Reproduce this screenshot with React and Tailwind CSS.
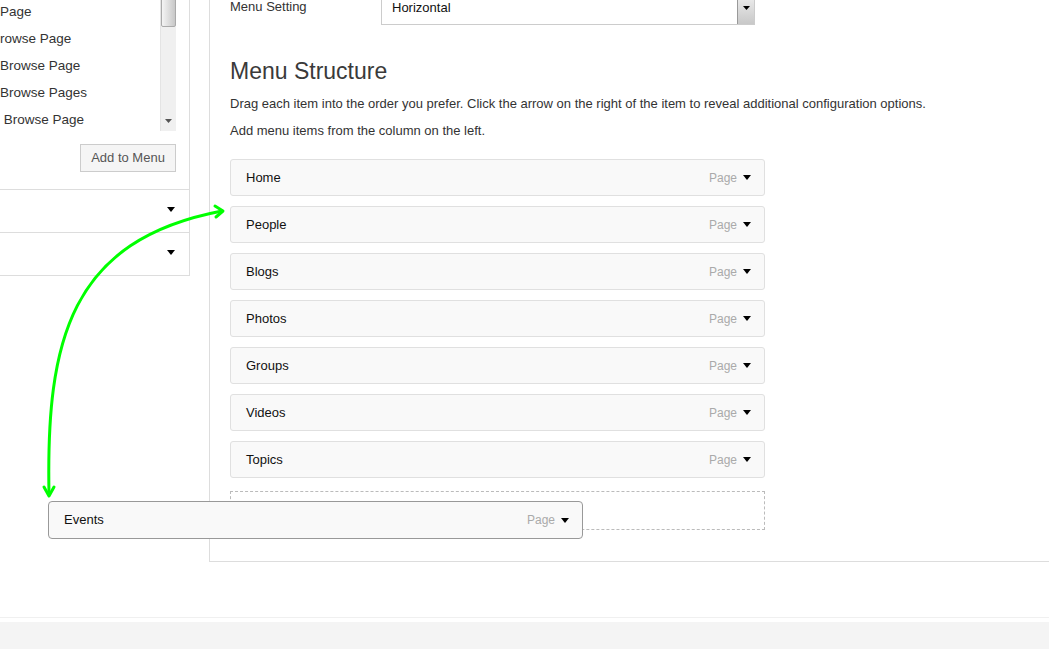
import React from 'react'

const items = ['Home', 'People', 'Blogs', 'Photos', 'Groups', 'Videos', 'Topics']
const leftList = ['Page', 'rowse Page', 'Browse Page', 'Browse Pages', '\u00a0Browse Page']

function Caret({ className = '' }) {
  return (
    <svg className={className} width="8" height="5" viewBox="0 0 8 5">
      <path d="M0 0h8L4 5z" fill="#000" />
    </svg>
  )
}

function MenuItem({ label }) {
  return (
    <div className="flex h-[37px] w-[535px] items-center rounded-[3px] border border-[#e0e0e0] bg-[#f9f9f9] pl-[15px] pr-[13px]">
      <span className="flex-1 text-[13px] text-[#111]">{label}</span>
      <span className="text-[12px] text-[#aaa]">Page</span>
      <Caret className="ml-[6px]" />
    </div>
  )
}

export default function App() {
  return (
    <div className="relative flex min-h-[649px] w-full flex-col overflow-hidden bg-white font-['Liberation_Sans',Arial,sans-serif] text-[#333]">
      <div className="flex">
        {/* left column: add items */}
        <div className="w-[190px] shrink-0">
          <div className="border-r border-b border-[#ddd]">
            <div className="flex pr-[13px]">
              <div className="-mt-[1px] flex-1 overflow-hidden">
                {leftList.map((t, i) => (
                  <div key={i} className="flex h-[27px] items-center whitespace-pre text-[13.5px] text-[#333]">{t}</div>
                ))}
              </div>
              <div className="-mt-[4px] flex h-[135px] w-[16px] flex-col border-l border-[#e4e4e4] bg-[#f0f0f0]">
                <div className="h-[31px] rounded-b-[2px] border border-[#aaa] bg-gradient-to-r from-[#f4f4f4] to-[#c8c8c8]"></div>
                <div className="flex-1"></div>
                <div className="flex h-[12px] items-start justify-center">
                  <svg width="7" height="4" viewBox="0 0 7 4"><path d="M0 0h7L3.5 4z" fill="#555" /></svg>
                </div>
              </div>
            </div>
            <div className="flex justify-end pt-[10px] pb-[17px] pr-[13px]">
              <button className="h-[28px] w-[96px] border border-[#ccc] bg-[#f5f5f5] text-[13px] text-[#555]">Add to Menu</button>
            </div>
            <div className="flex h-[43px] items-center justify-end border-t border-[#ddd] pr-[14px] pb-[3px]">
              <Caret />
            </div>
            <div className="flex h-[43px] items-center justify-end border-t border-[#ddd] pr-[14px] pb-[3px]">
              <Caret />
            </div>
          </div>
        </div>

        {/* main column */}
        <div className="ml-[19px] flex-1 border-l border-b border-[#ddd] pl-5 pb-[31px]">
          <div className="flex items-start">
            <div className="w-[151px] pt-[1px] text-[13px] leading-[12px] text-[#333]">Menu Setting</div>
            <div className="-mt-[7px] flex h-[32px] w-[374px] items-center border border-[#ccc] bg-white">
              <span className="flex-1 -mt-[2px] pl-[10px] text-[13px] text-[#111]">Horizontal</span>
              <div className="flex h-full w-[17px] items-center justify-center border-l border-[#999] bg-gradient-to-b from-[#f0f0f0] to-[#c8c8c8]">
                <svg width="7" height="4" viewBox="0 0 7 4" className="-mt-[2px]"><path d="M0 0h7L3.5 4z" fill="#000" /></svg>
              </div>
            </div>
          </div>

          <h2 className="mt-[32px] text-[23px] leading-[28px] text-[#3a3a3a]">Menu Structure</h2>
          <p className="mt-[11px] text-[13px] leading-[15px]">Drag each item into the order you prefer. Click the arrow on the right of the item to reveal additional configuration options.</p>
          <p className="mt-[12px] text-[13px] leading-[15px]">Add menu items from the column on the left.</p>

          <div className="mt-[21px] flex flex-col gap-[10px]">
            {items.map(t => <MenuItem key={t} label={t} />)}
            <div className="mt-[3px] h-[39px] w-[535px] border border-dashed border-[#bbb]"></div>
          </div>
        </div>
      </div>

      <div className="mt-[55px] h-[5px] border-t border-[#f0f0f0]"></div>
      <div className="flex-1 bg-[#f4f4f4]"></div>

      {/* item being dragged */}
      <div className="absolute left-[48px] top-[501px] flex h-[38px] w-[535px] items-center rounded-[4px] border border-[#999] bg-[#f9f9f9] pl-[15px] pr-[13px]">
        <span className="flex-1 text-[13px] text-[#111]">Events</span>
        <span className="text-[12px] text-[#aaa]">Page</span>
        <Caret className="ml-[6px]" />
      </div>

      {/* green guide arrow */}
      <svg className="pointer-events-none absolute left-0 top-0" width="1049" height="649">
        <g fill="none" stroke="#00ff00" strokeWidth="3" strokeLinecap="round" strokeLinejoin="round">
          <path d="M49 494 C46 340 70 240 222 211" />
          <path d="M44 487 L49 496 L54 487" />
          <path d="M215 206 L223 211 L216 217" />
        </g>
      </svg>
    </div>
  )
}
